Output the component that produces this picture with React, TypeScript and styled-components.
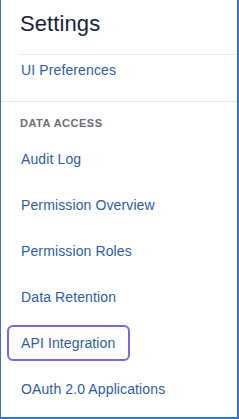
import React from 'react';
import styled, { createGlobalStyle } from 'styled-components';

const GlobalStyle = createGlobalStyle`
  html, body {
    margin: 0;
    padding: 0;
    background: #fff;
  }
  body {
    font-family: "Liberation Sans", Arial, Helvetica, sans-serif;
  }
`;

const Panel = styled.div`
  box-sizing: border-box;
  width: 239px;
  height: 419px;
  background: #fff;
  border-left: 1px solid #3a70d3;
  border-right: 2px solid #3a70d3;
  border-bottom: 2px solid #3a70d3;
  overflow: hidden;
`;

const Header = styled.div`
  padding: 10px 0 0 19px;
`;

const Title = styled.h1`
  margin: 0;
  font-size: 22px;
  line-height: 28px;
  font-weight: 400;
  letter-spacing: 0.1px;
  color: #172340;
`;

const HeaderRule = styled.div`
  margin: 16px 0 0 19px;
  height: 1px;
  background: #e6e8ec;
`;

const NavList = styled.ul<{ $offset: number }>`
  list-style: none;
  margin: ${(p) => p.$offset}px 0 0 0;
  padding: 0 0 0 6px;
  display: flex;
  flex-direction: column;
  align-items: flex-start;
  gap: 10px;
`;

const NavLink = styled.a<{ $focused?: boolean }>`
  display: inline-block;
  padding: 8px 13px 8px 12px;
  border: 2px solid ${(p) => (p.$focused ? '#7467f2' : 'transparent')};
  border-radius: 6px;
  font-size: 14px;
  line-height: 16px;
  letter-spacing: 0.12px;
  color: #2c5da6;
  text-decoration: none;
  cursor: pointer;
`;

const Divider = styled.div`
  margin-top: 13px;
  height: 1px;
  background: #e3e5ea;
`;

const SectionTitle = styled.div`
  margin-top: 13px;
  padding-left: 19px;
  font-size: 11px;
  line-height: 16px;
  font-weight: 700;
  letter-spacing: 0.5px;
  color: #6b6e76;
`;

const dataAccess = [
  'Audit Log',
  'Permission Overview',
  'Permission Roles',
  'Data Retention',
  'API Integration',
  'OAuth 2.0 Applications',
];

const App: React.FC = () => {
  return (
    <>
      <GlobalStyle />
      <Panel>
        <Header>
          <Title>Settings</Title>
        </Header>
        <HeaderRule />
        <NavList $offset={-3}>
          <li>
            <NavLink>UI Preferences</NavLink>
          </li>
        </NavList>
        <Divider />
        <SectionTitle>DATA ACCESS</SectionTitle>
        <NavList $offset={10}>
          {dataAccess.map((name) => (
            <li key={name}>
              <NavLink $focused={name === 'API Integration'}>{name}</NavLink>
            </li>
          ))}
        </NavList>
      </Panel>
    </>
  );
};

export default App;
